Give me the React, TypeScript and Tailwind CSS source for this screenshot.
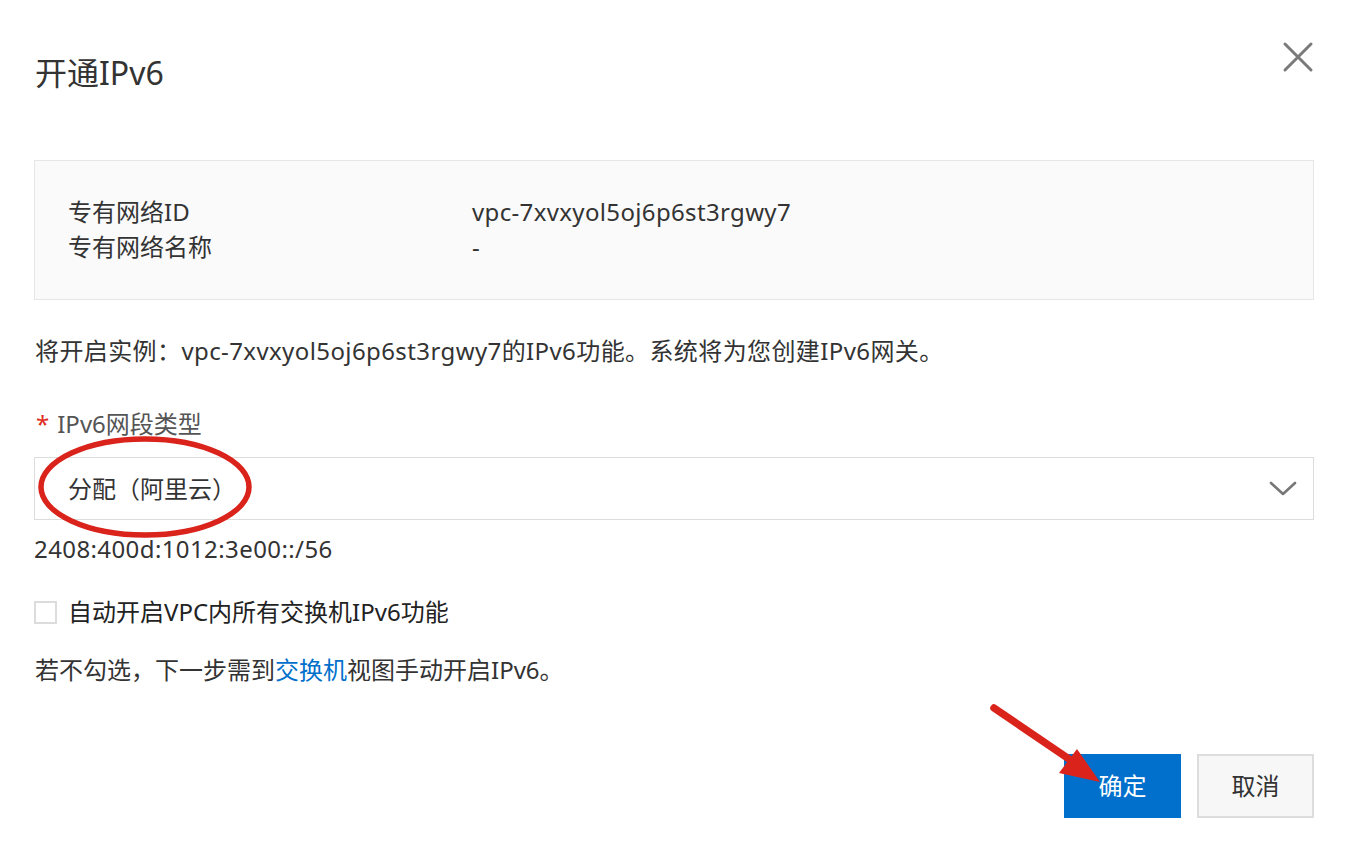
import React from "react";

export default function App() {
  return (
    <div
      className="relative w-[1348px] h-[864px] bg-white text-[#333333] overflow-hidden"
      style={{ fontFamily: '"Noto Sans", "Noto Sans CJK SC", sans-serif' }}
    >
      <div className="px-[34px]">
        {/* header */}
        <div className="flex items-center justify-between pt-[53px]">
          <h1 className="pl-[1px] text-[32px] leading-[40px] text-[#333333]">开通IPv6</h1>
        </div>

        {/* info box */}
        <div className="mt-[67px] h-[140px] border border-[#e6e6e6] bg-[#fafafa] pl-[33px] pt-[33px]">
          <div className="grid grid-cols-[404px_1fr] text-[24px] leading-[35px] text-[#333333]">
            <div>专有网络ID</div>
            <div className="tracking-[0.35px]">vpc-7xvxyol5oj6p6st3rgwy7</div>
            <div>专有网络名称</div>
            <div>-</div>
          </div>
        </div>

        {/* description */}
        <div className="mt-[33px] pl-[1px] text-[24px] leading-[36px] tracking-[0.4px]">
          将开启实例：vpc-7xvxyol5oj6p6st3rgwy7的IPv6功能。系统将为您创建IPv6网关。
        </div>

        {/* label */}
        <div className="mt-[37px] flex items-center text-[24px] leading-[36px] text-[#555555]">
          <span className="text-[#e02e24] mr-[8px] pl-[2px]">*</span>
          <span>IPv6网段类型</span>
        </div>

        {/* select */}
        <div className="mt-[15px] h-[63px] border border-[#dcdcdc] bg-white flex items-center justify-between pl-[33px] pr-[16px]">
          <span className="text-[24px] leading-[36px] text-[#333333]">分配（阿里云）</span>
          <svg width="28" height="16" viewBox="0 0 28 16" fill="none">
            <path d="M2 2 L14 13 L26 2" stroke="#777777" strokeWidth="2.6" strokeLinecap="round" strokeLinejoin="round" />
          </svg>
        </div>

        {/* ip */}
        <div className="mt-[11px] text-[24px] leading-[36px] text-[#333333] tracking-[0.4px]">2408:400d:1012:3e00::/56</div>

        {/* checkbox */}
        <div className="mt-[27px] flex items-center h-[36px]">
          <div className="w-[23px] h-[23px] border-[2px] border-[#dcdcdc] bg-white" />
          <span className="ml-[11px] text-[24px] leading-[36px] text-[#222222]">自动开启VPC内所有交换机IPv6功能</span>
        </div>

        {/* hint */}
        <div className="mt-[22px] pl-[1px] text-[24px] leading-[36px] text-[#333333]">
          若不勾选，下一步需到<span className="text-[#0070cc]">交换机</span>视图手动开启IPv6。
        </div>

        {/* buttons */}
        <div className="mt-[66px] flex justify-end gap-[16px]">
          <button className="w-[117px] h-[64px] bg-[#0070cc] text-white text-[24px]">确定</button>
          <button className="w-[117px] h-[64px] bg-[#f7f7f7] border-[2px] border-[#dddddd] text-[#333333] text-[24px]">取消</button>
        </div>
      </div>

      {/* close icon */}
      <svg className="absolute left-[1282px] top-[41px]" width="32" height="32" viewBox="0 0 32 32" fill="none">
        <path d="M3 3 L29 29 M29 3 L3 29" stroke="#7a7a7a" strokeWidth="3" strokeLinecap="round" />
      </svg>

      {/* red annotations */}
      <svg className="absolute left-0 top-0 pointer-events-none" width="1348" height="864" viewBox="0 0 1348 864" fill="none">
        <ellipse cx="145" cy="487" rx="104" ry="48" stroke="#d9231b" strokeWidth="5.5" />
        <line x1="994" y1="708" x2="1075" y2="763" stroke="#d9231b" strokeWidth="7.5" strokeLinecap="round" />
        <polygon points="1100,782 1077,749 1059,773" fill="#d9231b" />
      </svg>
    </div>
  );
}
